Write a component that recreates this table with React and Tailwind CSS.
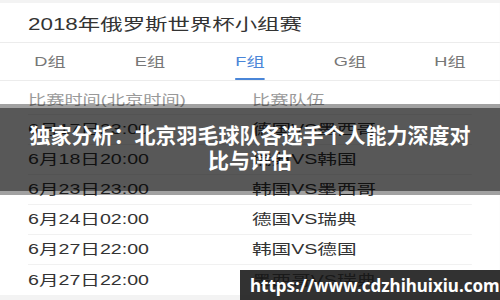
import React from 'react'

const tabs = ['D组', 'E组', 'F组', 'G组', 'H组']

const matches = [
  ['6月17日23:00', '德国VS墨西哥'],
  ['6月18日20:00', '瑞典VS韩国'],
  ['6月23日23:00', '韩国VS墨西哥'],
  ['6月24日02:00', '德国VS瑞典'],
  ['6月27日22:00', '韩国VS德国'],
  ['6月27日22:00', '墨西哥VS瑞典'],
]

const tableFont = { fontFamily: '"Liberation Sans", "Noto Sans CJK SC", sans-serif' }

export default function App() {
  return (
    <div className="relative w-[500px] h-[300px] overflow-hidden bg-[#f3f3f3]" style={tableFont}>
      {/* the screenshot underneath is stretched sideways */}
      <div className="w-[357.2px] origin-top-left scale-x-[1.4]">
        <div className="h-[3px] bg-[#f3f3f3]" />
        <div className="bg-white">
          {/* Title */}
          <div className="h-[40px] flex items-center pt-[5px] px-5 border-b border-[#ececec]">
            <h1 className="text-[16px] text-[#333]">2018年俄罗斯世界杯小组赛</h1>
          </div>

          {/* Tabs */}
          <div className="flex h-[38px] border-b border-[#ececec]">
            {tabs.map((t) => (
              <div key={t} className="flex-1 flex justify-center">
                <div
                  className={`h-full flex items-center pt-[2px] border-b-2 text-[13px] ${
                    t === 'F组' ? 'border-[#4a86d8] text-[#4a86d8]' : 'border-transparent text-[#777]'
                  }`}
                >
                  {t}
                </div>
              </div>
            ))}
          </div>

          {/* Table */}
          <div className="px-5">
            <div className="grid grid-cols-[160px_1fr] h-[34px] pt-[5px] items-center text-[13px] text-[#999] border-b border-[#f1f1f1]">
              <span>比赛时间(北京时间)</span>
              <span>比赛队伍</span>
            </div>
            {matches.map(([time, teams], i) => (
              <div
                key={i}
                className={`grid grid-cols-[160px_1fr] h-[30px] items-center text-[14px] text-[#333] ${
                  i < matches.length - 1 ? 'border-b border-[#f1f1f1]' : ''
                }`}
              >
                <span>{time}</span>
                <span>{teams}</span>
              </div>
            ))}
          </div>
        </div>
      </div>

      {/* Headline band */}
      <div className="absolute left-0 right-0 top-[104px] h-[91px] bg-black/[0.37] py-[4px]">
        <div className="h-full bg-black/[0.45] flex items-center justify-center px-6 pb-[5px]">
          <p
            className="text-white font-bold text-[21px] leading-[25px] text-center"
            style={{ fontFamily: '"Noto Sans CJK SC", sans-serif' }}
          >
            独家分析：北京羽毛球队各选手个人能力深度对比与评估
          </p>
        </div>
      </div>

      {/* Watermark */}
      <div className="absolute right-0 bottom-0 w-[260px] h-[30px] bg-[#161616]/[0.88] flex items-center pl-[10px]">
        <span
          className="text-white font-bold text-[17px] leading-none whitespace-nowrap"
          style={{ fontFamily: '"Noto Sans", "Open Sans", sans-serif' }}
        >
          https://www.cdzhihuixiu.com
        </span>
      </div>
    </div>
  )
}
